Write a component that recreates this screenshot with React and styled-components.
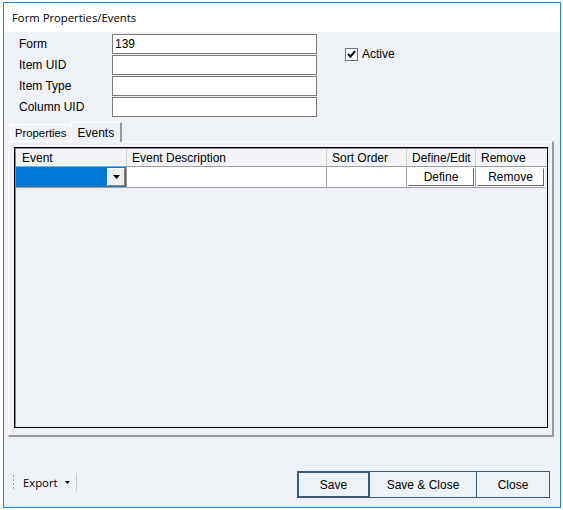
import React from 'react'
import styled, { createGlobalStyle } from 'styled-components'

const GlobalStyle = createGlobalStyle`
  html, body {
    margin: 0;
    padding: 0;
    background: #ffffff;
  }
  body {
    font-family: "Liberation Sans", Arial, sans-serif;
    font-size: 12px;
    color: #000;
  }
`

const fields = [
  { label: 'Form', value: '139' },
  { label: 'Item UID', value: '' },
  { label: 'Item Type', value: '' },
  { label: 'Column UID', value: '' },
]

const columns = [
  { title: 'Event', width: 110 },
  { title: 'Event Description', width: 200 },
  { title: 'Sort Order', width: 80 },
  { title: 'Define/Edit', width: 69 },
  { title: 'Remove', width: 70 },
]

function App() {
  return (
    <>
      <GlobalStyle />
      <Window>
        <TitleBar>Form Properties/Events</TitleBar>
        <Body>
          <Header>
            <Fields>
              {fields.map(f => (
                <FieldRow key={f.label}>
                  <Label>{f.label}</Label>
                  <TextBox defaultValue={f.value} />
                </FieldRow>
              ))}
            </Fields>
            <CheckRow>
              <CheckBox>
                <svg width="9" height="9" viewBox="0 0 9 9">
                  <path d="M1 4 L3.5 6.8 L8 1.2" stroke="#000" strokeWidth="2" fill="none" />
                </svg>
              </CheckBox>
              <span>Active</span>
            </CheckRow>
          </Header>

          <TabStrip>
            <Tab>Properties</Tab>
            <Tab $active>Events</Tab>
          </TabStrip>
          <TabPanel>
            <Grid>
              <HeaderRow>
                {columns.map((c, i) => (
                  <HeadCell key={c.title} style={{ width: c.width }} $first={i === 0}>
                    {c.title}
                  </HeadCell>
                ))}
              </HeaderRow>
              <DataRow>
                <ComboCell style={{ width: columns[0].width }}>
                  <DropButton>
                    <svg width="7" height="4" viewBox="0 0 7 4">
                      <path d="M0 0 H7 L3.5 4 Z" fill="#000" />
                    </svg>
                  </DropButton>
                </ComboCell>
                <Cell style={{ width: columns[1].width }} />
                <Cell style={{ width: columns[2].width }} />
                <ButtonCell style={{ width: columns[3].width }}>
                  <CellButton>Define</CellButton>
                </ButtonCell>
                <ButtonCell style={{ width: columns[4].width }}>
                  <CellButton>Remove</CellButton>
                </ButtonCell>
              </DataRow>
            </Grid>
          </TabPanel>

          <Footer>
            <ToolStrip>
              <Grip />
              <ExportLabel>Export</ExportLabel>
              <svg width="5" height="3" viewBox="0 0 5 3">
                <path d="M0 0 H5 L2.5 3 Z" fill="#000" />
              </svg>
              <Separator />
            </ToolStrip>
            <Buttons>
              <DialogButton $default style={{ width: 73 }}>Save</DialogButton>
              <DialogButton style={{ width: 108 }}>Save &amp; Close</DialogButton>
              <DialogButton style={{ width: 74 }}>Close</DialogButton>
            </Buttons>
          </Footer>
        </Body>
      </Window>
    </>
  )
}

export default App

const Window = styled.div`
  margin: 2px 0 0 3px;
  width: 558px;
  height: 506px;
  box-sizing: border-box;
  border: 1px solid #1c84d8;
  display: flex;
  flex-direction: column;
  background: #eef1f6;
`

const TitleBar = styled.div`
  height: 29px;
  background: #ffffff;
  padding-left: 8px;
  display: flex;
  align-items: center;
  font-family: "Open Sans", "Noto Sans", sans-serif;
  font-size: 11.3px;
  color: #000;
`

const Body = styled.div`
  flex: 1;
  display: flex;
  flex-direction: column;
  padding: 2px 6px 0 4px;
`

const Header = styled.div`
  display: flex;
  align-items: flex-start;
`

const Fields = styled.div`
  display: flex;
  flex-direction: column;
  gap: 1px;
  padding-left: 11px;
`

const FieldRow = styled.div`
  display: flex;
  align-items: center;
  height: 20px;
`

const Label = styled.div`
  width: 93px;
  color: #000;
`

const TextBox = styled.input`
  width: 205px;
  height: 20px;
  box-sizing: border-box;
  border: 1px solid #7a7a7a;
  background: #fff;
  padding: 0 2px;
  font-family: "Liberation Sans", Arial, sans-serif;
  font-size: 12px;
  outline: none;
`

const CheckRow = styled.div`
  display: flex;
  align-items: center;
  gap: 4px;
  margin: 13px 0 0 28px;
`

const CheckBox = styled.div`
  width: 13px;
  height: 13px;
  box-sizing: border-box;
  border: 1px solid #707070;
  background: #fff;
  display: flex;
  align-items: center;
  justify-content: center;
`

const TabStrip = styled.div`
  display: flex;
  align-items: flex-end;
  margin: 5px 0 0 2px;
  height: 19px;
`

const Tab = styled.div`
  height: ${p => (p.$active ? '20px' : '17px')};
  padding: 0 ${p => (p.$active ? '6px' : '4px')};
  box-sizing: border-box;
  display: flex;
  align-items: center;
  font-size: ${p => (p.$active ? '12px' : '11.3px')};
  background: ${p => (p.$active ? '#eef1f6' : '#f2f4f8')};
  border-top: 1px solid #ffffff;
  border-left: 1px solid #ffffff;
  border-right: ${p => (p.$active ? '2px solid #9a9a9a' : '1px solid #b8b8b8')};
  margin-left: ${p => (p.$active ? '-1px' : '0')};
  position: relative;
  z-index: ${p => (p.$active ? 1 : 0)};
  margin-bottom: ${p => (p.$active ? '-1px' : '0')};
`

const TabPanel = styled.div`
  height: 296px;
  box-sizing: border-box;
  border-top: 1px solid #ffffff;
  border-left: 1px solid #ffffff;
  border-right: 2px solid #9a9a9a;
  border-bottom: 2px solid #9a9a9a;
  padding: 5px 4px 7px 5px;
  display: flex;
`

const Grid = styled.div`
  flex: 1;
  box-sizing: border-box;
  border: 1px solid #000;
  box-shadow: inset 1px 1px 0 #8a8a8a;
  padding: 1px 0 0 1px;
  display: flex;
  flex-direction: column;
`

const HeaderRow = styled.div`
  display: flex;
  height: 17px;
  border-bottom: 1px solid #a0a0a0;
`

const HeadCell = styled.div`
  box-sizing: border-box;
  padding-left: ${p => (p.$first ? '6px' : '5px')};
  display: flex;
  align-items: center;
  border-left: ${p => (p.$first ? 'none' : '1px solid #d0d0d0')};
  background: #f2f4f8;
`

const DataRow = styled.div`
  display: flex;
  height: 21px;
`

const Cell = styled.div`
  box-sizing: border-box;
  background: #fff;
  border-left: 1px solid #a0a0a0;
  border-bottom: 1px solid #a0a0a0;
`

const ComboCell = styled.div`
  box-sizing: border-box;
  background: #0078d7;
  display: flex;
  justify-content: flex-end;
  align-items: center;
  padding-right: 1px;
  border-bottom: 1px solid #a0a0a0;
`

const DropButton = styled.div`
  width: 18px;
  height: 18px;
  box-sizing: border-box;
  background: #f0f0f0;
  border-top: 1px solid #ffffff;
  border-left: 1px solid #ffffff;
  border-right: 1px solid #808080;
  border-bottom: 1px solid #808080;
  display: flex;
  align-items: center;
  justify-content: center;
`

const ButtonCell = styled(Cell)`
  padding: 1px;
  display: flex;
`

const CellButton = styled.div`
  flex: 1;
  box-sizing: border-box;
  background: #fff;
  border-top: 1px solid #ffffff;
  border-left: 1px solid #ffffff;
  border-right: 1px solid #6a6a6a;
  border-bottom: 1px solid #6a6a6a;
  display: flex;
  align-items: center;
  justify-content: center;
`

const Footer = styled.div`
  flex: 1;
  display: flex;
  align-items: flex-end;
  justify-content: space-between;
  padding: 0 4px 9px 2px;
`

const ToolStrip = styled.div`
  display: flex;
  align-items: center;
  height: 22px;
  margin-bottom: 5px;
`

const Grip = styled.div`
  width: 1px;
  height: 14px;
  margin-right: 9px;
  margin-left: 3px;
  background: repeating-linear-gradient(to bottom, #a0a0a0 0 2px, transparent 2px 4px);
`

const ExportLabel = styled.span`
  font-family: "Open Sans", "Noto Sans", sans-serif;
  font-size: 11.3px;
  margin-right: 7px;
`

const Separator = styled.div`
  width: 1px;
  height: 18px;
  background: #c4c8cf;
  margin-left: 6px;
`

const Buttons = styled.div`
  display: flex;
`

const DialogButton = styled.div`
  height: 27px;
  box-sizing: border-box;
  border: ${p => (p.$default ? '2px solid #3e5a78' : '1px solid #3e5a78')};
  margin-left: -1px;
  background: #eef1f6;
  display: flex;
  align-items: center;
  justify-content: center;
`
